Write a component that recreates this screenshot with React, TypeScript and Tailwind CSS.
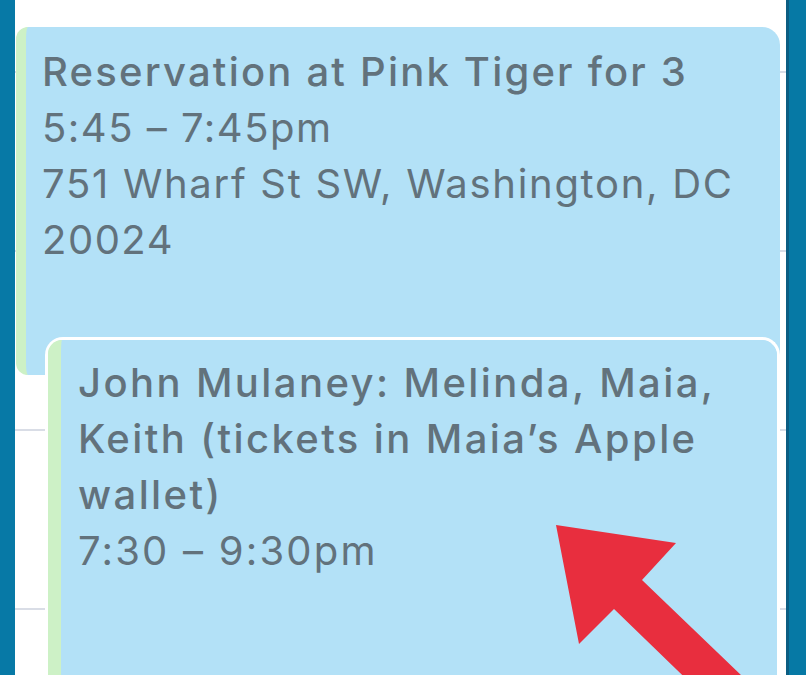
export default function App() {
  return (
    <div className="relative flex h-[675px] w-[806px] overflow-hidden bg-white font-['Inter','Roboto','Liberation_Sans',sans-serif] text-[40px] leading-[56px] tracking-[1.5px] text-[#62727c]">
      <div className="w-[15px] shrink-0 bg-[#0779a6]" />

      <div className="flex flex-1 flex-col bg-[repeating-linear-gradient(to_bottom,transparent_0,transparent_71px,#d9dde6_71px,#d9dde6_73px,transparent_73px,transparent_179px)] pl-[1px] pr-[6px]">
        <div className="mt-[27px] h-[348px] shrink-0 rounded-[12px] rounded-tr-[18px] border-l-[10px] border-[#cdf1c6] bg-[#b3e1f7] pl-[16px] pt-[17px]">
          <div className="font-medium tracking-[2.2px]">Reservation at Pink Tiger for 3</div>
          <div>5:45 – 7:45pm</div>
          <div className="tracking-[1.7px]">751 Wharf St SW, Washington, DC</div>
          <div>20024</div>
        </div>

        <div className="relative z-10 -mt-[38px] ml-[29px] flex-1 rounded-t-[18px] border-[3px] border-b-0 border-white">
          <div className="h-full rounded-tl-[14px] rounded-tr-[16px] border-l-[13px] border-[#cdf1c6] bg-[#b3e1f7] pl-[17px] pt-[15px]">
            <div className="font-medium tracking-[2.4px]">
              <div>John Mulaney: Melinda, Maia,</div>
              <div>Keith (tickets in Maia’s Apple</div>
              <div>wallet)</div>
            </div>
            <div className="tracking-[2.2px]">7:30 – 9:30pm</div>
          </div>
        </div>
      </div>

      <div className="flex w-[20px] shrink-0">
        <div className="w-[3px] bg-[#0b5d82]" />
        <div className="flex-1 bg-[#0679a5]" />
      </div>

      <svg className="pointer-events-none absolute left-0 top-0 z-20" width="806" height="675" viewBox="0 0 806 675">
        <polygon
          points="556,525 676,543 642,580 767,700 708,700 614,609 579,644"
          fill="#e82e3e"
        />
      </svg>
    </div>
  )
}
